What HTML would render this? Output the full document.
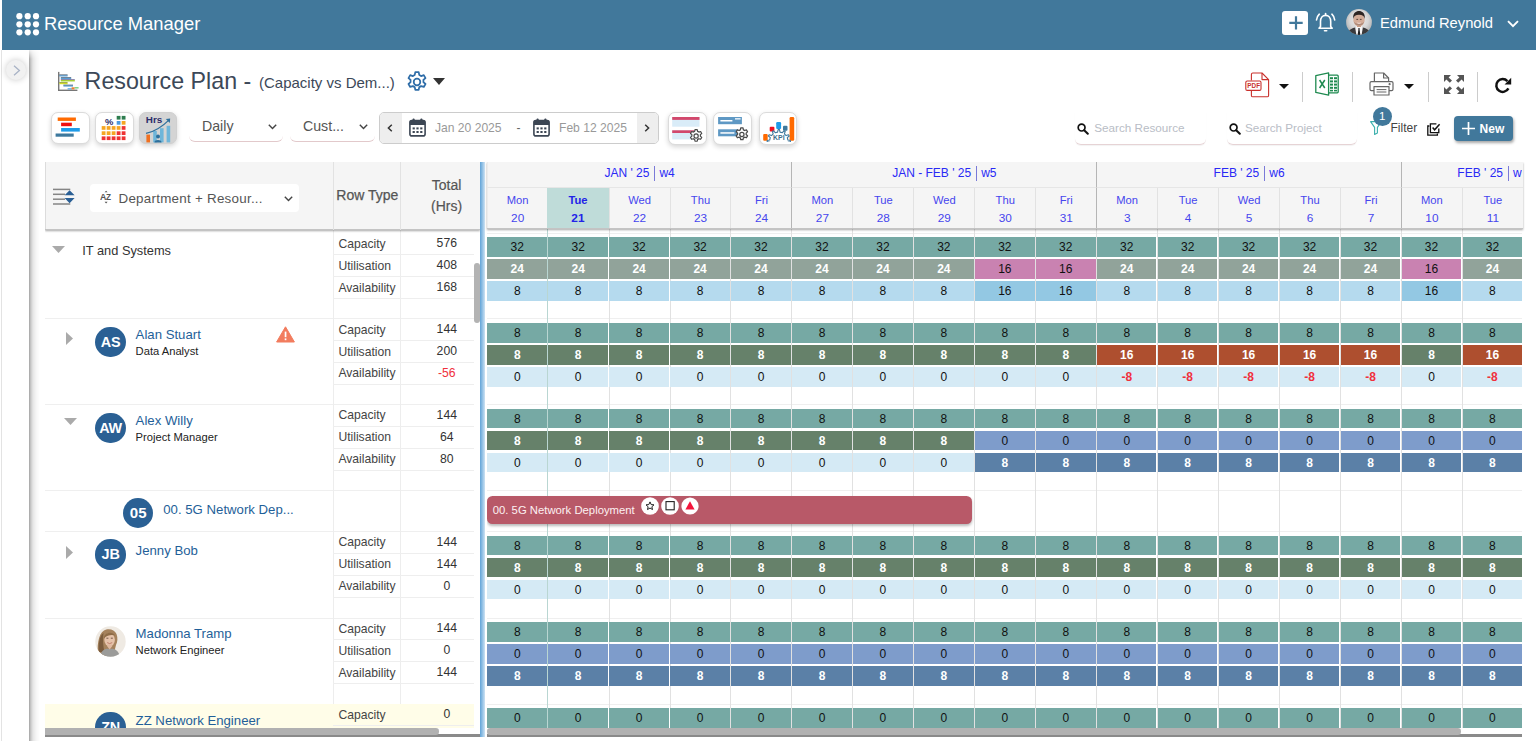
<!DOCTYPE html>
<html lang="en"><head><meta charset="utf-8"><title>Resource Manager - Resource Plan</title>
<style>
*{box-sizing:border-box;margin:0;padding:0}
html,body{width:1536px;height:741px;overflow:hidden;background:#fff}
body{position:relative;font-family:"Liberation Sans",sans-serif;color:#333;font-size:12px}
svg{display:block}
.abs,#hdr *,#main>*{position:absolute}
#hdr{position:absolute;left:2.4px;top:0;width:1533.6px;height:49.5px;background:#41789b;color:#fff}
#hdr .dots{left:13.2px;top:13px}
#hdr .app{left:41.6px;top:13px;font-size:18.4px;line-height:21px;white-space:nowrap}
#hdr .plus{left:1279.7px;top:10.9px;width:26px;height:23.7px;background:#fff;border-radius:3px}
#hdr .bell{left:1312.6px;top:11.8px}
#hdr .uav{left:1343.4px;top:9.4px}
#hdr .uname{left:1377.5px;top:15.2px;font-size:14.75px;line-height:17px;white-space:nowrap}
#hdr .uchev{left:1504.7px;top:20px}
#edge{position:absolute;left:1.4px;top:49.5px;width:1px;height:692px;background:#e3e3e3}
#side{position:absolute;left:2.4px;top:49.5px;width:26.8px;height:692px;background:#fff}
#side .tog{position:absolute;left:3.7px;top:10.3px;width:20.2px;height:20.2px;border-radius:50%;background:#f1f1f1;box-shadow:0 0 6px rgba(0,0,0,.22)}
#side .tog svg{position:absolute;left:7.2px;top:5px}
#shadow{position:absolute;left:29.2px;top:50px;width:12px;height:691px;background:linear-gradient(to right,rgba(0,0,0,.36),rgba(0,0,0,.2) 2px,rgba(0,0,0,.1) 4px,rgba(0,0,0,.04) 7px,rgba(0,0,0,0) 11px);-webkit-mask-image:linear-gradient(to bottom,rgba(0,0,0,.2),#000 9px);mask-image:linear-gradient(to bottom,rgba(0,0,0,.2),#000 9px)}
#main{position:absolute;left:0;top:0;width:1536px;height:741px}
.ttl{left:84.6px;top:67.9px;font-size:23.25px;line-height:27px;color:#3c4858;white-space:nowrap}
.sub{left:259px;top:74.2px;font-size:15px;line-height:18px;color:#3c4858;white-space:nowrap}
.ibtn{width:38.5px;height:32.6px;top:111.5px;border:1px solid #dbdbdb;border-radius:7px;background:#fff;box-shadow:0 2px 5px rgba(0,0,0,.17)}
.ibtn svg{position:absolute}
.ibtn.on{background:#d4d4d4;border-color:#d0d0d0}
.sel{top:112px;height:29.5px;border-bottom:1px solid #e2c9cb;border-radius:0 0 6px 6px;font-size:14.2px;line-height:17px;color:#555}
.sel span{position:absolute;left:12.6px;top:6.4px;white-space:nowrap}
.sel svg{position:absolute;top:11.6px}
.drange{left:379px;top:111.5px;width:280px;height:32.2px;border:1px solid #ccc;border-radius:5px;background:#fff;overflow:hidden}
.drange>*{position:absolute}
.drange .nb{top:0;width:22px;height:30px;background:#eee}
.drange .dt{top:8.3px;font-size:12.1px;line-height:14px;color:#999;white-space:nowrap}
.srch{top:112px;height:33.4px;border-bottom:1px solid #e6d3d5;border-radius:0 0 6px 6px;box-shadow:0 1px 1px rgba(0,0,0,.05)}
.srch span{position:absolute;top:8.6px;font-size:11.7px;line-height:14px;color:#b9bdc6;white-space:nowrap}
.srch svg{position:absolute;left:2.3px;top:10.6px}
.vsep{width:1px;top:72px;height:30px;background:#ccc}
.badge{left:1372.9px;top:107.1px;width:18.8px;height:18.8px;border-radius:50%;background:#41789b;color:#fff;font-size:11.5px;line-height:18.8px;text-align:center}
.filt{left:1390.5px;top:120.6px;font-size:12px;line-height:14px;color:#444}
.newb{left:1454px;top:115.6px;width:59.4px;height:25.3px;border-radius:4px;background:#41789b;box-shadow:1px 2px 3px rgba(0,0,0,.35);color:#fff;font-weight:700;font-size:12px;line-height:14px}
.newb span{position:absolute;left:25.6px;top:6px}
.newb svg{position:absolute;left:7.8px;top:6.2px}
/* grid */
#grid{position:absolute;left:44.6px;top:161.5px;width:1482px;height:575.5px;overflow:hidden;background:#fff}
#grid div,#grid svg,#grid span,#grid b{position:absolute}
.lhead{left:0;top:0;width:435.2px;height:68.6px;background:#f5f5f5;border-bottom:1px solid #c4c4c4;box-shadow:inset 1px 0 0 #dcdcdc,0 1px 2px rgba(0,0,0,.35);z-index:5}
.sorticon{left:8.5px;top:26.1px}
.grpsel{left:45.4px;top:22.5px;width:209px;height:28px;background:#fff;border-radius:4px}
.grpsel .az{left:9.6px;top:6.4px}
.grpsel .gtxt{left:28.5px;top:6.5px;font-size:13.4px;line-height:16px;color:#555;letter-spacing:.25px;white-space:nowrap}
.grpsel .chev{left:194.5px;top:11.6px}
.hdiv{top:0;width:1px;height:68px;background:#e2e2e2}
.hrow{left:291.7px;top:25.3px;font-size:14px;line-height:16px;color:#555;white-space:nowrap;font-weight:400;-webkit-text-stroke:.25px #555}
.htot{left:356px;width:92px;top:13.2px;text-align:center;font-size:14px;line-height:21.2px;color:#555;-webkit-text-stroke:.2px #555}
.ghead{left:442.1px;top:0;width:1036.5px;height:67.4px;background:#f5f5f5;border-bottom:1px solid #c4c4c4;box-shadow:0 1px 2px rgba(0,0,0,.35);z-index:5;overflow:hidden}
.wk{top:0;height:26px;border-left:1px solid #b5b5b5;border-bottom:1px solid #e6e6e6;text-align:center;white-space:nowrap;font-size:12px;line-height:24px;padding-bottom:2px;color:#2929f5;display:flex;justify-content:center;align-items:center}
#grid .wk span{position:static}
#grid .wk i{position:static;display:inline-block;width:1px;height:15px;background:#7a7ad8;margin:0 4px 0 5px}
.dy{top:26px;width:60.95px;height:40.7px;border-left:1px solid #e2e2e2;text-align:center;color:#4646ee;font-size:11.2px}
.dy.wkb{border-left-color:#b5b5b5}
#grid .dy b{font-weight:400;left:0;width:100%;line-height:13px}
#grid .dy b:first-child{top:6.8px}
#grid .dy b:last-child{top:24.2px;font-size:11.8px}
.dy.today{background:#bfdcd9;color:#2222e8;border-left:0;left:60.6px !important;width:61.3px}
.dy.first,.wk.first{border-left-color:#ececec}
#grid .dy.today b{font-weight:700}
.split{left:435.4px;top:0;width:4.6px;height:575.4px;background:linear-gradient(to right,#62a4d8,#8fbfe4 45%,#cde2f3);z-index:6}
.lbody{left:0;top:0;width:435.2px;height:575.5px;overflow:hidden}
.rbody{left:442.1px;top:0;width:1035.8px;height:575.5px;overflow:hidden}
.rt{left:293.8px;font-size:12.15px;line-height:14px;color:#444;white-space:nowrap}
.tv{left:372.2px;width:60px;text-align:center;font-size:12.2px;line-height:14px;color:#333;margin-top:-.6px}
.tv.neg{color:#f0303c}
.rl{left:288.9px;width:140.5px;height:1px;background:#eeeeee}
.gl{left:0;width:100%;height:1px;background:#efefef}
.lbody .gl{width:429.4px}
.vd{top:68px;width:1px;height:510px;background:#ededed}
.zz{left:0;width:429.4px;height:40px;background:#fffde8}
.av{left:50.9px;width:30.2px;height:30.2px;border-radius:50%;background:#2a6094;color:#fff;font-weight:700;font-size:14.4px;line-height:30.6px;text-align:center;letter-spacing:-.2px}
.av.pj{left:78.7px;font-size:15px;letter-spacing:.3px}
.nm{left:91px;font-size:13.2px;line-height:15px;color:#1f5f99;white-space:nowrap}
.nm.pjn{left:118.7px;margin-top:-1.2px}
.ro{left:91px;font-size:11.2px;line-height:13px;color:#222;white-space:nowrap}
.dept{left:37.7px;font-size:12.8px;line-height:15px;color:#333;white-space:nowrap}
.warn{left:231.6px}
.ph{left:50.6px}
.vthumb{left:429.4px;top:101.3px;width:5.6px;height:60.7px;border-radius:3px;background:#b3b3b3}
.crow{left:0;width:1040px}
.c{top:0;height:100%;width:59.5px;text-align:center;font-size:12px;color:#111}
.c.w{color:#fff;font-weight:700}
.c.neg{color:#f0303c;font-weight:700}
.vl{top:66px;width:1px;height:510px;background:#e1e1e1}
.vl.tl{background:#b9d6d2}
.pbar{left:.3px;width:485.4px;height:27.7px;border-radius:5.5px;background:#b85968;box-shadow:0 2px 3px rgba(0,0,0,.28)}
.pbar span{left:5.8px;top:0;font-size:11.3px;line-height:28.4px;color:#fdf1f2;white-space:nowrap}
.pi{top:.7px}
.bcov{left:0;top:566.5px;width:1477.9px;height:9px;background:#fff;z-index:4}
.bbar{left:0;top:572.8px;width:435.4px;height:2.6px;background:#8a8a8a;z-index:5}
.bbar2{left:442.4px;top:572.8px;width:1035.5px;height:2.6px;background:#8a8a8a;z-index:5}
.hth1{left:0;top:566.7px;width:394.2px;height:6.4px;background:#b1b1b1;border-radius:0 3.2px 3.2px 0;z-index:7}
.hth2{left:442.6px;top:566.7px;width:974.2px;height:6.4px;background:#b1b1b1;border-radius:3.2px;z-index:7}

.gcov{left:1035.6px;top:0;width:2px;height:25px;background:#f5f5f5;z-index:3}

</style></head>
<body>
<div id="hdr">
<svg class="dots" width="24" height="24" viewBox="0 0 24 24" fill="#fff"><circle cx="3.4" cy="3.2" r="3.1"/><circle cx="11.7" cy="3.2" r="3.1"/><circle cx="20" cy="3.2" r="3.1"/><circle cx="3.4" cy="11.3" r="3.1"/><circle cx="11.7" cy="11.3" r="3.1"/><circle cx="20" cy="11.3" r="3.1"/><circle cx="3.4" cy="19.3" r="3.1"/><circle cx="11.7" cy="19.3" r="3.1"/><circle cx="20" cy="19.3" r="3.1"/></svg>
<div class="app">Resource Manager</div>
<div class="plus"><svg width="26" height="24" viewBox="0 0 26 24"><path d="M14 5.2 V18.6 M7.3 11.9 H20.7" stroke="#41789b" stroke-width="2.2" fill="none"/></svg></div>
<svg class="bell" width="22" height="21" viewBox="0 0 22 21" fill="none" stroke="#fff" stroke-width="1.6" stroke-linecap="round"><path d="M5.5 14.4 V9.4 C5.5 5.8 7.6 3.4 10.6 3.4 C13.6 3.4 15.7 5.8 15.7 9.4 V14.4 L17.2 16.2 H4 Z" stroke-linejoin="round"/><path d="M9.5 18.7 H11.7"/><path d="M10.6 3.2 V1.6"/><path d="M4.3 2.2 C2.6 3.8 1.7 5.8 1.5 8"/><path d="M16.9 2.2 C18.6 3.8 19.5 5.8 19.7 8"/></svg>
<svg class="uav" width="26" height="26" viewBox="0 0 26 26"><defs><clipPath id="uc"><circle cx="13" cy="13" r="12.9"/></clipPath><radialGradient id="ug" cx="50%" cy="42%" r="60%"><stop offset="0" stop-color="#efefef"/><stop offset=".6" stop-color="#d6d6d6"/><stop offset="1" stop-color="#a9a9a9"/></radialGradient></defs><g clip-path="url(#uc)"><rect width="26" height="26" fill="url(#ug)"/><path d="M1 26 C2 21 5.5 19.4 9.4 18.6 L13 22 L16.6 18.6 C20.5 19.4 24 21 25 26 Z" fill="#3a3a3c"/><path d="M9.2 18.7 L10.8 17 L15.2 17 L16.8 18.7 L15.6 26 L10.4 26 Z" fill="#f5f5f5"/><path d="M12.1 19.3 L13.9 19.3 L13.6 20.6 L14.4 26 L11.6 26 L12.4 20.6 Z" fill="#1f1f22"/><rect x="11" y="14.6" width="4" height="3.4" fill="#c99b82"/><ellipse cx="13" cy="10.9" rx="5.7" ry="6.4" fill="#d3ac98"/><path d="M7.2 10 C6.6 4 10 2 13 2 C16 2 19.4 4 18.8 10 C18.2 7 16.4 5.8 13 5.8 C9.6 5.8 7.8 7 7.2 10 Z" fill="#2d2523"/><path d="M7.8 12.6 C8.4 18 17.6 18 18.2 12.6 C17 15.8 9 15.8 7.8 12.6 Z" fill="#8b6a5b" opacity=".55"/><path d="M10.4 10.4 h1.7 M13.9 10.4 h1.7" stroke="#3b2a25" stroke-width=".8"/><path d="M11.4 13.9 Q13 15 14.6 13.9" stroke="#f3e6e0" stroke-width=".8" fill="none"/></g></svg>
<div class="uname">Edmund Reynold</div>
<svg class="uchev" width="12" height="8" viewBox="0 0 12 8"><path d="M1 1.2 L6 6.2 L11 1.2" stroke="#fff" stroke-width="1.9" fill="none"/></svg>
</div>
<div id="edge"></div>
<div id="side"><div class="tog"><svg width="8" height="11" viewBox="0 0 8 11"><path d="M1 0.8 L6.4 5.5 L1 10.2" stroke="#a9b3c6" stroke-width="1.3" fill="none"/></svg></div></div>
<div id="shadow"></div>
<div id="main">
<svg style="left:57.1px;top:71.2px" width="22" height="21" viewBox="0 0 22 21"><rect x="1.0" y="0.9" width="1.4" height="19.1" fill="#777"/><rect x="1.0" y="18.6" width="19.4" height="1.4" fill="#777"/><rect x="2.3" y="3.5" width="8.3" height="0.9" fill="#3a4a5a"/><rect x="2.3" y="4.4" width="8.3" height="1.0" fill="#3a8fd0"/><rect x="3.8" y="6.3" width="10.4" height="0.9" fill="#34506e"/><rect x="3.8" y="7.2" width="10.4" height="0.9" fill="#3a8fd0"/><rect x="3.8" y="8.4" width="14.0" height="0.8" fill="#4a3f7a"/><rect x="3.8" y="9.2" width="14.0" height="1.2" fill="#9acb10"/><rect x="2.3" y="11.2" width="8.3" height="0.8" fill="#8f9a20"/><rect x="2.3" y="12.0" width="8.3" height="1.2" fill="#cfdc28"/><rect x="6.4" y="13.7" width="9.6" height="0.9" fill="#34506e"/><rect x="6.4" y="14.6" width="9.6" height="0.9" fill="#3a8fd0"/><rect x="10.6" y="17.3" width="4.3" height="1.1" fill="#3f9fe0"/><rect x="17.4" y="16.3" width="4.2" height="1.1" fill="#4fc060"/><rect x="14.6" y="16.3" width="2.9" height="2.1" fill="#f08030"/></svg>
<div class="ttl">Resource Plan -</div>
<div class="sub">(Capacity vs Dem...)</div>
<svg style="left:404.5px;top:70.2px" width="24" height="24" viewBox="0 0 24 24" fill="none" stroke="#2f6da8" stroke-width="1.75" stroke-linejoin="round"><path d="M10.3 2.2 h3.4 l.55 2.75 a7.4 7.4 0 0 1 1.9 1.1 l2.65-.9 1.7 2.95 -2.1 1.85 a7.4 7.4 0 0 1 0 2.2 l2.1 1.85 -1.7 2.95 -2.65-.9 a7.4 7.4 0 0 1 -1.9 1.1 l-.55 2.75 h-3.4 l-.55-2.75 a7.4 7.4 0 0 1 -1.9-1.1 l-2.65.9 -1.7-2.95 2.1-1.85 a7.4 7.4 0 0 1 0-2.2 l-2.1-1.85 1.7-2.95 2.65.9 a7.4 7.4 0 0 1 1.9-1.1 z"/><circle cx="12" cy="12" r="3.3"/></svg>
<svg style="left:432.8px;top:78px" width="12" height="7" viewBox="0 0 12 7"><path d="M0 0 H12 L6 7 Z" fill="#333"/></svg>

<div class="ibtn" style="left:51.3px"><svg style="left:0;top:-.6px" width="36" height="30" viewBox="0 0 36 30"><rect x="5.7" y="5.5" width="18.2" height="3.4" fill="#ff6a00"/><rect x="9.1" y="10.7" width="10.7" height="3.5" fill="#f01010"/><rect x="9.1" y="16" width="18.7" height="3.6" fill="#1e9be8"/><rect x="3.6" y="21.5" width="18.1" height="3.2" fill="#3d789d"/></svg></div>
<div class="ibtn" style="left:95.3px"><svg style="left:0;top:-.7px" width="36" height="30" viewBox="0 0 36 30"><rect x="20.7" y="3.9" width="3.8" height="3.7" fill="#2e7d4f"/><rect x="25.7" y="3.9" width="3.8" height="3.7" fill="#2e7d4f"/><rect x="20.7" y="9.0" width="3.8" height="3.7" fill="#4a9be0"/><rect x="25.7" y="9.0" width="3.8" height="3.7" fill="#f5a623"/><rect x="5.7" y="14.1" width="3.8" height="3.7" fill="#f5a623"/><rect x="10.7" y="14.1" width="3.8" height="3.7" fill="#f5a623"/><rect x="15.7" y="14.1" width="3.8" height="3.7" fill="#f5a623"/><rect x="20.7" y="14.1" width="3.8" height="3.7" fill="#f5a623"/><rect x="25.7" y="14.1" width="3.8" height="3.7" fill="#ee3333"/><rect x="5.7" y="19.3" width="3.8" height="3.7" fill="#f5a623"/><rect x="10.7" y="19.3" width="3.8" height="3.7" fill="#f5a623"/><rect x="15.7" y="19.3" width="3.8" height="3.7" fill="#f5a623"/><rect x="20.7" y="19.3" width="3.8" height="3.7" fill="#ee3333"/><rect x="25.7" y="19.3" width="3.8" height="3.7" fill="#ee3333"/><rect x="5.7" y="24.4" width="3.8" height="3.7" fill="#ee3333"/><rect x="10.7" y="24.4" width="3.8" height="3.7" fill="#ee3333"/><rect x="15.7" y="24.4" width="3.8" height="3.7" fill="#ee3333"/><rect x="20.7" y="24.4" width="3.8" height="3.7" fill="#ee3333"/><rect x="25.7" y="24.4" width="3.8" height="3.7" fill="#ee3333"/><text x="9" y="12.6" font-size="9.4" font-weight="700" fill="#2c2c6a" font-family="Liberation Sans, sans-serif">%</text></svg></div>
<div class="ibtn on" style="left:138.8px"><svg style="left:5px;top:2.4px" width="28" height="28" viewBox="0 0 28 28"><text x="0.8" y="8" font-size="9.9" font-weight="700" fill="#2c2c6a" font-family="Liberation Sans, sans-serif">Hrs</text><rect x="1.4" y="19.6" width="3.6" height="7.8" fill="#f07020"/><rect x="8.2" y="16" width="3.6" height="11.4" fill="#6fb6da"/><rect x="15" y="13.2" width="3.6" height="14.2" fill="#6fb6da"/><rect x="21.6" y="10.8" width="3.6" height="16.6" fill="#6fb6da"/><path d="M1 18.4 C9 16.8 17 12 24.4 4.6" stroke="#2d6f9c" stroke-width="1.2" fill="none"/><path d="M20.8 4 L25.2 3.6 L24.8 8 Z" fill="#2d6f9c"/><circle cx="13" cy="21.6" r="2" fill="#2d6f9c"/><path d="M9.4 27.4 C9.6 24.2 16.4 24.2 16.6 27.4 Z" fill="#2d6f9c"/></svg></div>

<div class="sel" style="left:189.4px;width:93.6px"><span>Daily</span><svg style="left:78.4px" width="9" height="6" viewBox="0 0 9 6"><path d="M0.8 0.8 L4.5 4.6 L8.2 0.8" stroke="#444" stroke-width="1.4" fill="none"/></svg></div>
<div class="sel" style="left:290.4px;width:84.3px"><span>Cust...</span><svg style="left:68.4px" width="9" height="6" viewBox="0 0 9 6"><path d="M0.8 0.8 L4.5 4.6 L8.2 0.8" stroke="#444" stroke-width="1.4" fill="none"/></svg></div>

<div class="drange">
<div class="nb" style="left:0"></div><div class="nb" style="left:256.5px"></div>
<svg style="left:7.4px;top:11px" width="6" height="8" viewBox="0 0 6 8"><path d="M4.8 0.8 L1.4 4 L4.8 7.2" stroke="#333" stroke-width="1.5" fill="none"/></svg>
<svg style="left:263.8px;top:11px" width="6" height="8" viewBox="0 0 6 8"><path d="M1.2 0.8 L4.6 4 L1.2 7.2" stroke="#333" stroke-width="1.5" fill="none"/></svg>
<svg style="left:29px;top:5px" width="17" height="19" viewBox="0 0 17 19"><rect x="0.9" y="2.6" width="15.2" height="15.3" rx="2" fill="none" stroke="#3c4654" stroke-width="1.6"/><rect x="0.9" y="2.6" width="15.2" height="4.4" fill="#3c4654"/><rect x="3.6" y="0.4" width="2" height="4" rx=".8" fill="#3c4654"/><rect x="11.4" y="0.4" width="2" height="4" rx=".8" fill="#3c4654"/><g fill="#3c4654"><rect x="3.6" y="9.4" width="2.2" height="2"/><rect x="7.4" y="9.4" width="2.2" height="2"/><rect x="11.2" y="9.4" width="2.2" height="2"/><rect x="3.6" y="13" width="2.2" height="2"/><rect x="7.4" y="13" width="2.2" height="2"/><rect x="11.2" y="13" width="2.2" height="2"/></g></svg>
<div class="dt" style="left:55px">Jan 20 2025</div>
<div class="dt" style="left:136.6px;color:#666">-</div>
<svg style="left:153px;top:5px" width="17" height="19" viewBox="0 0 17 19"><rect x="0.9" y="2.6" width="15.2" height="15.3" rx="2" fill="none" stroke="#3c4654" stroke-width="1.6"/><rect x="0.9" y="2.6" width="15.2" height="4.4" fill="#3c4654"/><rect x="3.6" y="0.4" width="2" height="4" rx=".8" fill="#3c4654"/><rect x="11.4" y="0.4" width="2" height="4" rx=".8" fill="#3c4654"/><g fill="#3c4654"><rect x="3.6" y="9.4" width="2.2" height="2"/><rect x="7.4" y="9.4" width="2.2" height="2"/><rect x="11.2" y="9.4" width="2.2" height="2"/><rect x="3.6" y="13" width="2.2" height="2"/><rect x="7.4" y="13" width="2.2" height="2"/><rect x="11.2" y="13" width="2.2" height="2"/></g></svg>
<div class="dt" style="left:179px">Feb 12 2025</div>
</div>

<div class="ibtn" style="left:668.2px;top:112px"><svg style="left:0;top:0" width="37" height="31" viewBox="0 0 37 31"><rect x="3.2" y="4" width="27.3" height="9.7" fill="#d9ecf8"/><rect x="3.2" y="4" width="27.3" height="2.9" fill="#d2486c"/><rect x="3.2" y="17.3" width="22" height="9.1" fill="#d9ecf8"/><rect x="3.2" y="17.3" width="22" height="2.7" fill="#d2486c"/><g transform="translate(19.2,15.1) scale(.66)" fill="#fff" stroke="#4a4a4a" stroke-width="1.8" stroke-linejoin="round"><path d="M10.3 2.2 h3.4 l.55 2.75 a7.4 7.4 0 0 1 1.9 1.1 l2.65-.9 1.7 2.95 -2.1 1.85 a7.4 7.4 0 0 1 0 2.2 l2.1 1.85 -1.7 2.95 -2.65-.9 a7.4 7.4 0 0 1 -1.9 1.1 l-.55 2.75 h-3.4 l-.55-2.75 a7.4 7.4 0 0 1 -1.9-1.1 l-2.65.9 -1.7-2.95 2.1-1.85 a7.4 7.4 0 0 1 0-2.2 l-2.1-1.85 1.7-2.95 2.65.9 a7.4 7.4 0 0 1 1.9-1.1 z"/><circle cx="12" cy="12" r="3.2"/></g></svg></div>
<div class="ibtn" style="left:713.4px;top:112px"><svg style="left:0;top:0" width="37" height="31" viewBox="0 0 37 31"><rect x="4.1" y="4" width="23.8" height="7.2" fill="#5e98c4"/><rect x="6.4" y="7" width="12" height="1.5" fill="#fff"/><rect x="21" y="5" width="5.6" height="1.6" fill="#dbe9f4"/><rect x="4.1" y="16.3" width="20" height="7" fill="#5e98c4"/><rect x="6.4" y="19.2" width="14" height="1.5" fill="#fff"/><g transform="translate(19.9,13.5) scale(.665)" fill="#fff" stroke="#4a4a4a" stroke-width="1.9" stroke-linejoin="round"><path d="M10.3 2.2 h3.4 l.55 2.75 a7.4 7.4 0 0 1 1.9 1.1 l2.65-.9 1.7 2.95 -2.1 1.85 a7.4 7.4 0 0 1 0 2.2 l2.1 1.85 -1.7 2.95 -2.65-.9 a7.4 7.4 0 0 1 -1.9 1.1 l-.55 2.75 h-3.4 l-.55-2.75 a7.4 7.4 0 0 1 -1.9-1.1 l-2.65.9 -1.7-2.95 2.1-1.85 a7.4 7.4 0 0 1 0-2.2 l-2.1-1.85 1.7-2.95 2.65.9 a7.4 7.4 0 0 1 1.9-1.1 z"/><circle cx="12" cy="12" r="3.2"/></g></svg></div>
<div class="ibtn" style="left:758.5px;top:112px"><svg style="left:3.3px;top:4px" width="32" height="25" viewBox="0 0 32 25"><rect x="0.2" y="17" width="4.5" height="6.8" rx="1" fill="#ff6a00"/><rect x="6.7" y="9.8" width="4.7" height="4.6" rx="1" fill="#f01020"/><rect x="13.2" y="5.1" width="4.9" height="6.9" rx="1.1" fill="#1e9be8"/><rect x="20" y="8.8" width="4.5" height="5" rx="1" fill="#3d789d"/><rect x="26.6" y="0" width="4.6" height="23.8" rx="1.3" fill="#ff6a00"/><path d="M6.7 25.4 L4.2 24.9 L4.2 23.5 L6.7 23.0 L7.3 20.7 L5.4 19.0 L6.1 17.8 L8.5 18.6 L10.2 16.9 L9.4 14.5 L10.6 13.8 L12.3 15.7 L14.6 15.1 L15.1 12.6 L16.5 12.6 L17.0 15.1 L19.3 15.7 L21.0 13.8 L22.2 14.5 L21.4 16.9 L23.1 18.6 L25.5 17.8 L26.2 19.0 L24.3 20.7 L24.9 23.0 L27.4 23.5 L27.4 24.9 L24.9 25.4" fill="#fff" stroke="#41789b" stroke-width="1.1" stroke-linejoin="round"/><text x="10.1" y="22.9" font-size="6.9" font-weight="700" fill="#3d6d8d" font-family="Liberation Sans, sans-serif">KPI</text></svg></div>

<div class="srch" style="left:1075.2px;width:130.7px"><svg width="12" height="12" viewBox="0 0 12 12"><circle cx="4.6" cy="4.6" r="3.4" fill="none" stroke="#111" stroke-width="1.7"/><path d="M7.2 7.2 L10.8 10.8" stroke="#111" stroke-width="2" stroke-linecap="round"/></svg><span style="left:19px">Search Resource</span></div>
<div class="srch" style="left:1227px;width:130px"><svg width="12" height="12" viewBox="0 0 12 12"><circle cx="4.6" cy="4.6" r="3.4" fill="none" stroke="#111" stroke-width="1.7"/><path d="M7.2 7.2 L10.8 10.8" stroke="#111" stroke-width="2" stroke-linecap="round"/></svg><span style="left:18px">Search Project</span></div>

<svg style="left:1244.6px;top:71.6px" width="25" height="26" viewBox="0 0 25 26" fill="none" stroke="#c9302c" stroke-width="1.1" stroke-linejoin="round"><path d="M6.4 8.6 V2.4 Q6.4 1 7.8 1 H17 L23.6 7.6 V23.4 Q23.6 24.8 22.2 24.8 H7.8 Q6.4 24.8 6.4 23.4 V18.6"/><path d="M17 1 V7.6 H23.6"/><rect x="0.8" y="9" width="15.2" height="9.4" rx="1.4" fill="#fff"/><text x="2.3" y="16.2" font-size="6.4" font-weight="700" fill="#c9302c" stroke="none" font-family="Liberation Sans, sans-serif">PDF</text></svg>
<svg style="left:1279.2px;top:84px" width="10" height="5" viewBox="0 0 10 5"><path d="M0 0 H10 L5 5 Z" fill="#111"/></svg>
<div class="vsep" style="left:1302.2px"></div>
<svg style="left:1314.8px;top:71.8px" width="24" height="24" viewBox="0 0 24 24" fill="none" stroke="#1f8a50" stroke-width="1.3" stroke-linejoin="round"><path d="M0.8 3.6 L13.6 0.8 V23.2 L0.8 20.4 Z" fill="#fff"/><path d="M13.6 3.2 H22.2 Q23.2 3.2 23.2 4.2 V19.8 Q23.2 20.8 22.2 20.8 H13.6"/><path d="M4.6 8 L9.8 16 M9.8 8 L4.6 16" stroke-width="1.5"/><g stroke="none" fill="#1f8a50"><rect x="15" y="5.2" width="3" height="2"/><rect x="19" y="5.2" width="3" height="2"/><rect x="15" y="8.4" width="3" height="2"/><rect x="19" y="8.4" width="3" height="2"/><rect x="15" y="11.6" width="3" height="2"/><rect x="19" y="11.6" width="3" height="2"/><rect x="15" y="14.8" width="3" height="2"/><rect x="19" y="14.8" width="3" height="2"/><rect x="15" y="17.8" width="3" height="1.6"/><rect x="19" y="17.8" width="3" height="1.6"/></g></svg>
<div class="vsep" style="left:1352px"></div>
<svg style="left:1369.4px;top:72px" width="25" height="24" viewBox="0 0 25 24" fill="none" stroke="#666" stroke-width="1.2" stroke-linejoin="round"><path d="M5.4 9.6 V1 H14.6 L19.6 6 V9.6"/><path d="M14.6 1 V6 H19.6"/><path d="M5 18.6 H2.4 Q1 18.6 1 17.2 V11 Q1 9.6 2.4 9.6 H22.6 Q24 9.6 24 11 V17.2 Q24 18.6 22.6 18.6 H20"/><rect x="5" y="14.6" width="15" height="8.4" fill="#fff"/><path d="M7.6 17.6 H17.4 M7.6 20 H17.4" stroke-width="1"/><circle cx="20.6" cy="12.2" r=".5"/></svg>
<svg style="left:1403.8px;top:84.2px" width="10" height="5" viewBox="0 0 10 5"><path d="M0 0 H10 L5 5 Z" fill="#111"/></svg>
<div class="vsep" style="left:1427.6px"></div>
<svg style="left:1444.2px;top:75.4px" width="20" height="19" viewBox="0 0 20 19" fill="#555"><path d="M0 0 H7 L4.6 2.4 L8 5.6 L5.8 7.8 L2.4 4.6 L0 7 Z"/><path d="M20 0 V7 L17.6 4.6 L14.2 7.8 L12 5.6 L15.4 2.4 L13 0 Z"/><path d="M0 19 V12 L2.4 14.4 L5.8 11.2 L8 13.4 L4.6 16.6 L7 19 Z"/><path d="M20 19 H13 L15.4 16.6 L12 13.4 L14.2 11.2 L17.6 14.4 L20 12 Z"/></svg>
<div class="vsep" style="left:1476.9px"></div>
<svg style="left:1494px;top:76.6px" width="18" height="17" viewBox="0 0 18 17"><path d="M14.4 11.4 A6.4 6.4 0 1 1 13.4 4.1" fill="none" stroke="#111" stroke-width="2.5"/><path d="M17.2 0.8 V7.4 H10.6 Z" fill="#111"/></svg>

<svg style="left:1370.2px;top:120.8px" width="12" height="14" viewBox="0 0 12 14" fill="none" stroke="#3bb0ad" stroke-width="1.1" stroke-linejoin="round"><path d="M0.6 0.6 H11.4 L7.4 6.4 V12 L4.6 13.4 V6.4 Z"/></svg>
<div class="badge">1</div>
<div class="filt">Filter</div>
<svg style="left:1426.6px;top:122.6px" width="14" height="13" viewBox="0 0 14 13" fill="none" stroke="#111" stroke-width="1.3"><path d="M2.4 3 H0.8 V12.2 H10.4 V10.6"/><path d="M11.8 5.4 V9.6 H3.4 V0.8 H9.4"/><path d="M5.6 4.6 L7.6 6.8 L12.6 1.2" stroke-width="1.5"/></svg>
<div class="newb"><svg width="13" height="13" viewBox="0 0 13 13"><path d="M6.5 0 V13 M0 6.5 H13" stroke="#fff" stroke-width="1.7"/></svg><span>New</span></div>
</div>
<div id="grid">
<div class="lhead">
<svg class="sorticon" width="23" height="18" viewBox="0 0 23 18"><g stroke="#858585" stroke-width="1.5"><line x1="0" y1="1.4" x2="17.3" y2="1.4"/><line x1="0" y1="6.3" x2="12" y2="6.3"/><line x1="0" y1="11.2" x2="12" y2="11.2"/><line x1="0" y1="16" x2="17.3" y2="16"/></g><path d="M11.6 7.3 L16.6 2.2 L21.6 7.3 Z M11.6 9.9 L21.6 9.9 L16.6 15.3 Z" fill="#2a5f95"/></svg>
<div class="grpsel"><svg class="az" width="13" height="15" viewBox="0 0 13 15"><text x="0" y="10.2" font-size="8.8" font-weight="700" fill="#555" font-family="Liberation Sans, sans-serif">A</text><text x="6" y="10.2" font-size="8.2" font-weight="700" fill="#555" font-family="Liberation Sans, sans-serif">Z</text><path d="M4.6 2.3 L6.1 0.8 L7.6 2.3 Z M4.6 11.8 L6.1 13.4 L7.6 11.8 Z" fill="#555"/></svg><span class="gtxt">Department + Resour...</span><svg class="chev" width="9" height="6" viewBox="0 0 9 6"><path d="M0.8 0.8 L4.5 4.6 L8.2 0.8" stroke="#444" stroke-width="1.4" fill="none"/></svg></div>
<div class="hdiv" style="left:288.4px"></div><div class="hdiv" style="left:355.3px"></div>
<div class="hrow">Row Type</div>
<div class="htot">Total<br>(Hrs)</div>
</div>
<div class="ghead">
<div class="wk first" style="left:0px;width:304.75px"><span>JAN ' 25</span><i></i><span>w4</span></div>
<div class="wk" style="left:304.75px;width:304.75px"><span>JAN - FEB ' 25</span><i></i><span>w5</span></div>
<div class="wk" style="left:609.5px;width:304.75px"><span>FEB ' 25</span><i></i><span>w6</span></div>
<div class="wk" style="left:914.25px;width:182.85px"><span>FEB ' 25</span><i></i><span>w7</span></div>
<div class="dy first" style="left:0px"><b>Mon</b><b>20</b></div>
<div class="dy today" style="left:60.95px"><b>Tue</b><b>21</b></div>
<div class="dy" style="left:121.9px"><b>Wed</b><b>22</b></div>
<div class="dy" style="left:182.85px"><b>Thu</b><b>23</b></div>
<div class="dy" style="left:243.8px"><b>Fri</b><b>24</b></div>
<div class="dy wkb" style="left:304.75px"><b>Mon</b><b>27</b></div>
<div class="dy" style="left:365.7px"><b>Tue</b><b>28</b></div>
<div class="dy" style="left:426.65px"><b>Wed</b><b>29</b></div>
<div class="dy" style="left:487.6px"><b>Thu</b><b>30</b></div>
<div class="dy" style="left:548.55px"><b>Fri</b><b>31</b></div>
<div class="dy wkb" style="left:609.5px"><b>Mon</b><b>3</b></div>
<div class="dy" style="left:670.45px"><b>Tue</b><b>4</b></div>
<div class="dy" style="left:731.4px"><b>Wed</b><b>5</b></div>
<div class="dy" style="left:792.35px"><b>Thu</b><b>6</b></div>
<div class="dy" style="left:853.3px"><b>Fri</b><b>7</b></div>
<div class="dy wkb" style="left:914.25px"><b>Mon</b><b>10</b></div>
<div class="dy" style="left:975.2px"><b>Tue</b><b>11</b></div>
<div class="gcov"></div></div>
<div class="split"></div>
<div class="lbody"><div class="gl" style="top:156.9px"></div><div class="gl" style="top:242.7px"></div><div class="gl" style="top:328.4px"></div><div class="gl" style="top:369.6px"></div><div class="gl" style="top:456.1px"></div><div class="gl" style="top:542.3px"></div><div class="vd" style="left:288.4px"></div><div class="vd" style="left:355.3px"></div><div class="zz" style="top:542.3px"></div><svg class="cd" style="left:7.9px;top:84.2px" width="13" height="7" viewBox="0 0 13 7"><path d="M0 0 L13 0 L6.5 7 Z" fill="#aaa"/></svg><div class="dept" style="top:81.5px">IT and Systems</div><div class="rt" style="top:75.4px">Capacity</div><div class="tv" style="top:75.4px">576</div><div class="rt" style="top:97.3px">Utilisation</div><div class="tv" style="top:97.3px">408</div><div class="rt" style="top:119.2px">Availability</div><div class="tv" style="top:119.2px">168</div><div class="rl" style="top:92.8px"></div><div class="rl" style="top:114.7px"></div><div class="rl" style="top:136.7px"></div><svg class="cd" style="left:21.7px;top:170.5px" width="7" height="13" viewBox="0 0 7 13"><path d="M0 0 L7 6.5 L0 13 Z" fill="#aaa"/></svg><div class="av" style="top:165.2px">AS</div><div class="nm" style="top:165.6px">Alan Stuart</div><div class="ro" style="top:183.4px">Data Analyst</div><svg class="warn" style="top:164.7px" width="19" height="17" viewBox="0 0 19 17"><path d="M9.5 0.8 L18.4 16 L0.6 16 Z" fill="#f27c5e" stroke="#f27c5e" stroke-width="1" stroke-linejoin="round"/><rect x="8.7" y="5.6" width="1.7" height="5.6" fill="#fff"/><rect x="8.7" y="12.4" width="1.7" height="1.8" fill="#fff"/></svg><div class="rt" style="top:161.1px">Capacity</div><div class="tv" style="top:161.1px">144</div><div class="rt" style="top:183px">Utilisation</div><div class="tv" style="top:183px">200</div><div class="rt" style="top:204.9px">Availability</div><div class="tv neg" style="top:204.9px">-56</div><div class="rl" style="top:178.5px"></div><div class="rl" style="top:200.4px"></div><div class="rl" style="top:222.4px"></div><svg class="cd" style="left:19.8px;top:256.3px" width="13" height="7" viewBox="0 0 13 7"><path d="M0 0 L13 0 L6.5 7 Z" fill="#aaa"/></svg><div class="av" style="top:251px">AW</div><div class="nm" style="top:251.4px">Alex Willy</div><div class="ro" style="top:269.2px">Project Manager</div><div class="rt" style="top:246.9px">Capacity</div><div class="tv" style="top:246.9px">144</div><div class="rt" style="top:268.8px">Utilisation</div><div class="tv" style="top:268.8px">64</div><div class="rt" style="top:290.7px">Availability</div><div class="tv" style="top:290.7px">80</div><div class="rl" style="top:264.3px"></div><div class="rl" style="top:286.2px"></div><div class="rl" style="top:308.2px"></div><div class="av pj" style="top:336.6px">05</div><div class="nm pjn" style="top:342px">00. 5G Network Dep...</div><svg class="cd" style="left:21.7px;top:384.9px" width="7" height="13" viewBox="0 0 7 13"><path d="M0 0 L7 6.5 L0 13 Z" fill="#aaa"/></svg><div class="av" style="top:377.9px">JB</div><div class="nm" style="top:381.6px">Jenny Bob</div><div class="rt" style="top:373.8px">Capacity</div><div class="tv" style="top:373.8px">144</div><div class="rt" style="top:395.7px">Utilisation</div><div class="tv" style="top:395.7px">144</div><div class="rt" style="top:417.6px">Availability</div><div class="tv" style="top:417.6px">0</div><div class="rl" style="top:391.2px"></div><div class="rl" style="top:413.1px"></div><div class="rl" style="top:435.1px"></div><div class="nm" style="top:464.8px">Madonna Tramp</div><div class="ro" style="top:482.6px">Network Engineer</div><svg class="ph" style="top:464.4px" width="31" height="31" viewBox="0 0 31 31"><defs><clipPath id="mc"><circle cx="15.5" cy="15.5" r="15.2"/></clipPath></defs><g clip-path="url(#mc)"><rect width="31" height="31" fill="#efeae3"/><path d="M3.5 31 C1.5 22 3 8 9 4.5 C13 2 19.5 3 21.5 8 C23 12 22.5 16 21 19 L19 27 L8 31 Z" fill="#a5825c"/><path d="M4 26 C3 18 4.5 10 8.5 7 C7.5 13 8 20 9.5 26 Z" fill="#7b5c3d"/><ellipse cx="14.6" cy="13.8" rx="5.3" ry="6.6" fill="#e6c3aa"/><path d="M8.8 12.4 C9.2 6.6 17 4.6 20.2 9.6 C16.5 8.4 12.6 9.2 8.8 12.4 Z" fill="#8e6c47"/><path d="M5 31 C6 24.5 10 22.2 14.6 23 C19.4 22.2 23.8 24.5 25 31 Z" fill="#9b9b99"/><path d="M12 20 L14.6 23.4 L17.4 20 L17 18.6 L12.4 18.6 Z" fill="#dfb9a0"/><path d="M12.2 16.6 Q14.6 18.6 17.2 16.6" stroke="#b5705e" stroke-width=".8" fill="none"/><path d="M11.4 12.2 h2 M15.8 12.2 h2" stroke="#5a4030" stroke-width=".8"/></g></svg><div class="rt" style="top:460.3px">Capacity</div><div class="tv" style="top:460.3px">144</div><div class="rt" style="top:482.2px">Utilisation</div><div class="tv" style="top:482.2px">0</div><div class="rt" style="top:504.1px">Availability</div><div class="tv" style="top:504.1px">144</div><div class="rl" style="top:477.7px"></div><div class="rl" style="top:499.6px"></div><div class="rl" style="top:521.6px"></div><div class="av" style="top:550.6px">ZN</div><div class="nm" style="top:551px">ZZ Network Engineer</div><div class="ro" style="top:568.8px">&nbsp;</div><div class="rt" style="top:546.5px">Capacity</div><div class="tv" style="top:546.5px">0</div><div class="rt" style="top:568.4px">Utilisation</div><div class="tv" style="top:568.4px">0</div><div class="rt" style="top:590.3px">Availability</div><div class="tv" style="top:590.3px">0</div><div class="rl" style="top:563.9px"></div><div class="rl" style="top:585.8px"></div><div class="rl" style="top:607.8px"></div><div class="vthumb"></div></div>
<div class="rbody"><div class="gl" style="top:71.2px"></div><div class="gl" style="top:156.9px"></div><div class="gl" style="top:242.7px"></div><div class="gl" style="top:328.4px"></div><div class="gl" style="top:369.6px"></div><div class="gl" style="top:456.1px"></div><div class="gl" style="top:542.3px"></div><div class="vl tl" style="left:60.65px"></div><div class="vl" style="left:121.9px"></div><div class="vl" style="left:182.85px"></div><div class="vl" style="left:243.8px"></div><div class="vl" style="left:304.75px"></div><div class="vl" style="left:365.7px"></div><div class="vl" style="left:426.65px"></div><div class="vl" style="left:487.6px"></div><div class="vl" style="left:548.55px"></div><div class="vl" style="left:609.5px"></div><div class="vl" style="left:670.45px"></div><div class="vl" style="left:731.4px"></div><div class="vl" style="left:792.35px"></div><div class="vl" style="left:853.3px"></div><div class="vl" style="left:914.25px"></div><div class="vl" style="left:975.2px"></div><div class="vl" style="left:1036.15px"></div><div class="crow" style="top:75.7px;height:19.7px;line-height:20.7px"><span class="c " style="left:0.8px;background:#76a9a4">32</span><span class="c " style="left:61.75px;background:#76a9a4">32</span><span class="c " style="left:122.7px;background:#76a9a4">32</span><span class="c " style="left:183.65px;background:#76a9a4">32</span><span class="c " style="left:244.6px;background:#76a9a4">32</span><span class="c " style="left:305.55px;background:#76a9a4">32</span><span class="c " style="left:366.5px;background:#76a9a4">32</span><span class="c " style="left:427.45px;background:#76a9a4">32</span><span class="c " style="left:488.4px;background:#76a9a4">32</span><span class="c " style="left:549.35px;background:#76a9a4">32</span><span class="c " style="left:610.3px;background:#76a9a4">32</span><span class="c " style="left:671.25px;background:#76a9a4">32</span><span class="c " style="left:732.2px;background:#76a9a4">32</span><span class="c " style="left:793.15px;background:#76a9a4">32</span><span class="c " style="left:854.1px;background:#76a9a4">32</span><span class="c " style="left:915.05px;background:#76a9a4">32</span><span class="c " style="left:976px;background:#76a9a4">32</span></div><div class="crow" style="top:97.7px;height:19.7px;line-height:20.7px"><span class="c w" style="left:0.8px;background:#91a39a">24</span><span class="c w" style="left:61.75px;background:#91a39a">24</span><span class="c w" style="left:122.7px;background:#91a39a">24</span><span class="c w" style="left:183.65px;background:#91a39a">24</span><span class="c w" style="left:244.6px;background:#91a39a">24</span><span class="c w" style="left:305.55px;background:#91a39a">24</span><span class="c w" style="left:366.5px;background:#91a39a">24</span><span class="c w" style="left:427.45px;background:#91a39a">24</span><span class="c " style="left:488.4px;background:#c982b1">16</span><span class="c " style="left:549.35px;background:#c982b1">16</span><span class="c w" style="left:610.3px;background:#91a39a">24</span><span class="c w" style="left:671.25px;background:#91a39a">24</span><span class="c w" style="left:732.2px;background:#91a39a">24</span><span class="c w" style="left:793.15px;background:#91a39a">24</span><span class="c w" style="left:854.1px;background:#91a39a">24</span><span class="c " style="left:915.05px;background:#c982b1">16</span><span class="c w" style="left:976px;background:#91a39a">24</span></div><div class="crow" style="top:119.7px;height:19.8px;line-height:20.8px"><span class="c " style="left:0.8px;background:#b5daee">8</span><span class="c " style="left:61.75px;background:#b5daee">8</span><span class="c " style="left:122.7px;background:#b5daee">8</span><span class="c " style="left:183.65px;background:#b5daee">8</span><span class="c " style="left:244.6px;background:#b5daee">8</span><span class="c " style="left:305.55px;background:#b5daee">8</span><span class="c " style="left:366.5px;background:#b5daee">8</span><span class="c " style="left:427.45px;background:#b5daee">8</span><span class="c " style="left:488.4px;background:#93c8e3">16</span><span class="c " style="left:549.35px;background:#93c8e3">16</span><span class="c " style="left:610.3px;background:#b5daee">8</span><span class="c " style="left:671.25px;background:#b5daee">8</span><span class="c " style="left:732.2px;background:#b5daee">8</span><span class="c " style="left:793.15px;background:#b5daee">8</span><span class="c " style="left:854.1px;background:#b5daee">8</span><span class="c " style="left:915.05px;background:#93c8e3">16</span><span class="c " style="left:976px;background:#b5daee">8</span></div><div class="crow" style="top:161.4px;height:19.7px;line-height:20.7px"><span class="c " style="left:0.8px;background:#76a9a4">8</span><span class="c " style="left:61.75px;background:#76a9a4">8</span><span class="c " style="left:122.7px;background:#76a9a4">8</span><span class="c " style="left:183.65px;background:#76a9a4">8</span><span class="c " style="left:244.6px;background:#76a9a4">8</span><span class="c " style="left:305.55px;background:#76a9a4">8</span><span class="c " style="left:366.5px;background:#76a9a4">8</span><span class="c " style="left:427.45px;background:#76a9a4">8</span><span class="c " style="left:488.4px;background:#76a9a4">8</span><span class="c " style="left:549.35px;background:#76a9a4">8</span><span class="c " style="left:610.3px;background:#76a9a4">8</span><span class="c " style="left:671.25px;background:#76a9a4">8</span><span class="c " style="left:732.2px;background:#76a9a4">8</span><span class="c " style="left:793.15px;background:#76a9a4">8</span><span class="c " style="left:854.1px;background:#76a9a4">8</span><span class="c " style="left:915.05px;background:#76a9a4">8</span><span class="c " style="left:976px;background:#76a9a4">8</span></div><div class="crow" style="top:183.4px;height:19.7px;line-height:20.7px"><span class="c w" style="left:0.8px;background:#66816a">8</span><span class="c w" style="left:61.75px;background:#66816a">8</span><span class="c w" style="left:122.7px;background:#66816a">8</span><span class="c w" style="left:183.65px;background:#66816a">8</span><span class="c w" style="left:244.6px;background:#66816a">8</span><span class="c w" style="left:305.55px;background:#66816a">8</span><span class="c w" style="left:366.5px;background:#66816a">8</span><span class="c w" style="left:427.45px;background:#66816a">8</span><span class="c w" style="left:488.4px;background:#66816a">8</span><span class="c w" style="left:549.35px;background:#66816a">8</span><span class="c w" style="left:610.3px;background:#ae4f2f">16</span><span class="c w" style="left:671.25px;background:#ae4f2f">16</span><span class="c w" style="left:732.2px;background:#ae4f2f">16</span><span class="c w" style="left:793.15px;background:#ae4f2f">16</span><span class="c w" style="left:854.1px;background:#ae4f2f">16</span><span class="c w" style="left:915.05px;background:#66816a">8</span><span class="c w" style="left:976px;background:#ae4f2f">16</span></div><div class="crow" style="top:205.4px;height:19.8px;line-height:20.8px"><span class="c " style="left:0.8px;background:#d5eaf5">0</span><span class="c " style="left:61.75px;background:#d5eaf5">0</span><span class="c " style="left:122.7px;background:#d5eaf5">0</span><span class="c " style="left:183.65px;background:#d5eaf5">0</span><span class="c " style="left:244.6px;background:#d5eaf5">0</span><span class="c " style="left:305.55px;background:#d5eaf5">0</span><span class="c " style="left:366.5px;background:#d5eaf5">0</span><span class="c " style="left:427.45px;background:#d5eaf5">0</span><span class="c " style="left:488.4px;background:#d5eaf5">0</span><span class="c " style="left:549.35px;background:#d5eaf5">0</span><span class="c neg" style="left:610.3px;background:#d5eaf5">-8</span><span class="c neg" style="left:671.25px;background:#d5eaf5">-8</span><span class="c neg" style="left:732.2px;background:#d5eaf5">-8</span><span class="c neg" style="left:793.15px;background:#d5eaf5">-8</span><span class="c neg" style="left:854.1px;background:#d5eaf5">-8</span><span class="c " style="left:915.05px;background:#d5eaf5">0</span><span class="c neg" style="left:976px;background:#d5eaf5">-8</span></div><div class="crow" style="top:247.2px;height:19.7px;line-height:20.7px"><span class="c " style="left:0.8px;background:#76a9a4">8</span><span class="c " style="left:61.75px;background:#76a9a4">8</span><span class="c " style="left:122.7px;background:#76a9a4">8</span><span class="c " style="left:183.65px;background:#76a9a4">8</span><span class="c " style="left:244.6px;background:#76a9a4">8</span><span class="c " style="left:305.55px;background:#76a9a4">8</span><span class="c " style="left:366.5px;background:#76a9a4">8</span><span class="c " style="left:427.45px;background:#76a9a4">8</span><span class="c " style="left:488.4px;background:#76a9a4">8</span><span class="c " style="left:549.35px;background:#76a9a4">8</span><span class="c " style="left:610.3px;background:#76a9a4">8</span><span class="c " style="left:671.25px;background:#76a9a4">8</span><span class="c " style="left:732.2px;background:#76a9a4">8</span><span class="c " style="left:793.15px;background:#76a9a4">8</span><span class="c " style="left:854.1px;background:#76a9a4">8</span><span class="c " style="left:915.05px;background:#76a9a4">8</span><span class="c " style="left:976px;background:#76a9a4">8</span></div><div class="crow" style="top:269.2px;height:19.7px;line-height:20.7px"><span class="c w" style="left:0.8px;background:#66816a">8</span><span class="c w" style="left:61.75px;background:#66816a">8</span><span class="c w" style="left:122.7px;background:#66816a">8</span><span class="c w" style="left:183.65px;background:#66816a">8</span><span class="c w" style="left:244.6px;background:#66816a">8</span><span class="c w" style="left:305.55px;background:#66816a">8</span><span class="c w" style="left:366.5px;background:#66816a">8</span><span class="c w" style="left:427.45px;background:#66816a">8</span><span class="c " style="left:488.4px;background:#7e9ccb">0</span><span class="c " style="left:549.35px;background:#7e9ccb">0</span><span class="c " style="left:610.3px;background:#7e9ccb">0</span><span class="c " style="left:671.25px;background:#7e9ccb">0</span><span class="c " style="left:732.2px;background:#7e9ccb">0</span><span class="c " style="left:793.15px;background:#7e9ccb">0</span><span class="c " style="left:854.1px;background:#7e9ccb">0</span><span class="c " style="left:915.05px;background:#7e9ccb">0</span><span class="c " style="left:976px;background:#7e9ccb">0</span></div><div class="crow" style="top:291.2px;height:19.8px;line-height:20.8px"><span class="c " style="left:0.8px;background:#d5eaf5">0</span><span class="c " style="left:61.75px;background:#d5eaf5">0</span><span class="c " style="left:122.7px;background:#d5eaf5">0</span><span class="c " style="left:183.65px;background:#d5eaf5">0</span><span class="c " style="left:244.6px;background:#d5eaf5">0</span><span class="c " style="left:305.55px;background:#d5eaf5">0</span><span class="c " style="left:366.5px;background:#d5eaf5">0</span><span class="c " style="left:427.45px;background:#d5eaf5">0</span><span class="c w" style="left:488.4px;background:#5b80a7">8</span><span class="c w" style="left:549.35px;background:#5b80a7">8</span><span class="c w" style="left:610.3px;background:#5b80a7">8</span><span class="c w" style="left:671.25px;background:#5b80a7">8</span><span class="c w" style="left:732.2px;background:#5b80a7">8</span><span class="c w" style="left:793.15px;background:#5b80a7">8</span><span class="c w" style="left:854.1px;background:#5b80a7">8</span><span class="c w" style="left:915.05px;background:#5b80a7">8</span><span class="c w" style="left:976px;background:#5b80a7">8</span></div><div class="pbar" style="top:334.6px"><span>00. 5G Network Deployment</span>
<svg class="pi" style="left:154.5px" width="18" height="18" viewBox="0 0 18 18"><circle cx="9" cy="9" r="8.8" fill="#fff"/><path d="M9 4.9 L10.15 7.55 L13 7.85 L10.85 9.75 L11.5 12.55 L9 11.05 L6.5 12.55 L7.15 9.75 L5 7.85 L7.85 7.55 Z" fill="none" stroke="#222" stroke-width="1" stroke-linejoin="round"/></svg>
<svg class="pi" style="left:174.5px" width="18" height="18" viewBox="0 0 18 18"><circle cx="9" cy="9" r="8.8" fill="#fff"/><rect x="5" y="4.6" width="8.2" height="8.2" fill="none" stroke="#222" stroke-width="1.1"/></svg>
<svg class="pi" style="left:193.8px" width="18" height="18" viewBox="0 0 18 18"><circle cx="9" cy="9" r="8.6" fill="#fff"/><path d="M9 4.2 L13.6 12.6 L4.4 12.6 Z" fill="#f5143c"/></svg>
</div><div class="crow" style="top:374.1px;height:19.7px;line-height:20.7px"><span class="c " style="left:0.8px;background:#76a9a4">8</span><span class="c " style="left:61.75px;background:#76a9a4">8</span><span class="c " style="left:122.7px;background:#76a9a4">8</span><span class="c " style="left:183.65px;background:#76a9a4">8</span><span class="c " style="left:244.6px;background:#76a9a4">8</span><span class="c " style="left:305.55px;background:#76a9a4">8</span><span class="c " style="left:366.5px;background:#76a9a4">8</span><span class="c " style="left:427.45px;background:#76a9a4">8</span><span class="c " style="left:488.4px;background:#76a9a4">8</span><span class="c " style="left:549.35px;background:#76a9a4">8</span><span class="c " style="left:610.3px;background:#76a9a4">8</span><span class="c " style="left:671.25px;background:#76a9a4">8</span><span class="c " style="left:732.2px;background:#76a9a4">8</span><span class="c " style="left:793.15px;background:#76a9a4">8</span><span class="c " style="left:854.1px;background:#76a9a4">8</span><span class="c " style="left:915.05px;background:#76a9a4">8</span><span class="c " style="left:976px;background:#76a9a4">8</span></div><div class="crow" style="top:396.1px;height:19.7px;line-height:20.7px"><span class="c w" style="left:0.8px;background:#66816a">8</span><span class="c w" style="left:61.75px;background:#66816a">8</span><span class="c w" style="left:122.7px;background:#66816a">8</span><span class="c w" style="left:183.65px;background:#66816a">8</span><span class="c w" style="left:244.6px;background:#66816a">8</span><span class="c w" style="left:305.55px;background:#66816a">8</span><span class="c w" style="left:366.5px;background:#66816a">8</span><span class="c w" style="left:427.45px;background:#66816a">8</span><span class="c w" style="left:488.4px;background:#66816a">8</span><span class="c w" style="left:549.35px;background:#66816a">8</span><span class="c w" style="left:610.3px;background:#66816a">8</span><span class="c w" style="left:671.25px;background:#66816a">8</span><span class="c w" style="left:732.2px;background:#66816a">8</span><span class="c w" style="left:793.15px;background:#66816a">8</span><span class="c w" style="left:854.1px;background:#66816a">8</span><span class="c w" style="left:915.05px;background:#66816a">8</span><span class="c w" style="left:976px;background:#66816a">8</span></div><div class="crow" style="top:418.1px;height:19.8px;line-height:20.8px"><span class="c " style="left:0.8px;background:#d5eaf5">0</span><span class="c " style="left:61.75px;background:#d5eaf5">0</span><span class="c " style="left:122.7px;background:#d5eaf5">0</span><span class="c " style="left:183.65px;background:#d5eaf5">0</span><span class="c " style="left:244.6px;background:#d5eaf5">0</span><span class="c " style="left:305.55px;background:#d5eaf5">0</span><span class="c " style="left:366.5px;background:#d5eaf5">0</span><span class="c " style="left:427.45px;background:#d5eaf5">0</span><span class="c " style="left:488.4px;background:#d5eaf5">0</span><span class="c " style="left:549.35px;background:#d5eaf5">0</span><span class="c " style="left:610.3px;background:#d5eaf5">0</span><span class="c " style="left:671.25px;background:#d5eaf5">0</span><span class="c " style="left:732.2px;background:#d5eaf5">0</span><span class="c " style="left:793.15px;background:#d5eaf5">0</span><span class="c " style="left:854.1px;background:#d5eaf5">0</span><span class="c " style="left:915.05px;background:#d5eaf5">0</span><span class="c " style="left:976px;background:#d5eaf5">0</span></div><div class="crow" style="top:460.6px;height:19.7px;line-height:20.7px"><span class="c " style="left:0.8px;background:#76a9a4">8</span><span class="c " style="left:61.75px;background:#76a9a4">8</span><span class="c " style="left:122.7px;background:#76a9a4">8</span><span class="c " style="left:183.65px;background:#76a9a4">8</span><span class="c " style="left:244.6px;background:#76a9a4">8</span><span class="c " style="left:305.55px;background:#76a9a4">8</span><span class="c " style="left:366.5px;background:#76a9a4">8</span><span class="c " style="left:427.45px;background:#76a9a4">8</span><span class="c " style="left:488.4px;background:#76a9a4">8</span><span class="c " style="left:549.35px;background:#76a9a4">8</span><span class="c " style="left:610.3px;background:#76a9a4">8</span><span class="c " style="left:671.25px;background:#76a9a4">8</span><span class="c " style="left:732.2px;background:#76a9a4">8</span><span class="c " style="left:793.15px;background:#76a9a4">8</span><span class="c " style="left:854.1px;background:#76a9a4">8</span><span class="c " style="left:915.05px;background:#76a9a4">8</span><span class="c " style="left:976px;background:#76a9a4">8</span></div><div class="crow" style="top:482.6px;height:19.7px;line-height:20.7px"><span class="c " style="left:0.8px;background:#7e9ccb">0</span><span class="c " style="left:61.75px;background:#7e9ccb">0</span><span class="c " style="left:122.7px;background:#7e9ccb">0</span><span class="c " style="left:183.65px;background:#7e9ccb">0</span><span class="c " style="left:244.6px;background:#7e9ccb">0</span><span class="c " style="left:305.55px;background:#7e9ccb">0</span><span class="c " style="left:366.5px;background:#7e9ccb">0</span><span class="c " style="left:427.45px;background:#7e9ccb">0</span><span class="c " style="left:488.4px;background:#7e9ccb">0</span><span class="c " style="left:549.35px;background:#7e9ccb">0</span><span class="c " style="left:610.3px;background:#7e9ccb">0</span><span class="c " style="left:671.25px;background:#7e9ccb">0</span><span class="c " style="left:732.2px;background:#7e9ccb">0</span><span class="c " style="left:793.15px;background:#7e9ccb">0</span><span class="c " style="left:854.1px;background:#7e9ccb">0</span><span class="c " style="left:915.05px;background:#7e9ccb">0</span><span class="c " style="left:976px;background:#7e9ccb">0</span></div><div class="crow" style="top:504.6px;height:19.8px;line-height:20.8px"><span class="c w" style="left:0.8px;background:#5b80a7">8</span><span class="c w" style="left:61.75px;background:#5b80a7">8</span><span class="c w" style="left:122.7px;background:#5b80a7">8</span><span class="c w" style="left:183.65px;background:#5b80a7">8</span><span class="c w" style="left:244.6px;background:#5b80a7">8</span><span class="c w" style="left:305.55px;background:#5b80a7">8</span><span class="c w" style="left:366.5px;background:#5b80a7">8</span><span class="c w" style="left:427.45px;background:#5b80a7">8</span><span class="c w" style="left:488.4px;background:#5b80a7">8</span><span class="c w" style="left:549.35px;background:#5b80a7">8</span><span class="c w" style="left:610.3px;background:#5b80a7">8</span><span class="c w" style="left:671.25px;background:#5b80a7">8</span><span class="c w" style="left:732.2px;background:#5b80a7">8</span><span class="c w" style="left:793.15px;background:#5b80a7">8</span><span class="c w" style="left:854.1px;background:#5b80a7">8</span><span class="c w" style="left:915.05px;background:#5b80a7">8</span><span class="c w" style="left:976px;background:#5b80a7">8</span></div><div class="crow" style="top:546.8px;height:19.7px;line-height:20.7px"><span class="c " style="left:0.8px;background:#76a9a4">0</span><span class="c " style="left:61.75px;background:#76a9a4">0</span><span class="c " style="left:122.7px;background:#76a9a4">0</span><span class="c " style="left:183.65px;background:#76a9a4">0</span><span class="c " style="left:244.6px;background:#76a9a4">0</span><span class="c " style="left:305.55px;background:#76a9a4">0</span><span class="c " style="left:366.5px;background:#76a9a4">0</span><span class="c " style="left:427.45px;background:#76a9a4">0</span><span class="c " style="left:488.4px;background:#76a9a4">0</span><span class="c " style="left:549.35px;background:#76a9a4">0</span><span class="c " style="left:610.3px;background:#76a9a4">0</span><span class="c " style="left:671.25px;background:#76a9a4">0</span><span class="c " style="left:732.2px;background:#76a9a4">0</span><span class="c " style="left:793.15px;background:#76a9a4">0</span><span class="c " style="left:854.1px;background:#76a9a4">0</span><span class="c " style="left:915.05px;background:#76a9a4">0</span><span class="c " style="left:976px;background:#76a9a4">0</span></div><div class="crow" style="top:568.8px;height:19.7px;line-height:20.7px"><span class="c " style="left:0.8px;background:#7e9ccb">0</span><span class="c " style="left:61.75px;background:#7e9ccb">0</span><span class="c " style="left:122.7px;background:#7e9ccb">0</span><span class="c " style="left:183.65px;background:#7e9ccb">0</span><span class="c " style="left:244.6px;background:#7e9ccb">0</span><span class="c " style="left:305.55px;background:#7e9ccb">0</span><span class="c " style="left:366.5px;background:#7e9ccb">0</span><span class="c " style="left:427.45px;background:#7e9ccb">0</span><span class="c " style="left:488.4px;background:#7e9ccb">0</span><span class="c " style="left:549.35px;background:#7e9ccb">0</span><span class="c " style="left:610.3px;background:#7e9ccb">0</span><span class="c " style="left:671.25px;background:#7e9ccb">0</span><span class="c " style="left:732.2px;background:#7e9ccb">0</span><span class="c " style="left:793.15px;background:#7e9ccb">0</span><span class="c " style="left:854.1px;background:#7e9ccb">0</span><span class="c " style="left:915.05px;background:#7e9ccb">0</span><span class="c " style="left:976px;background:#7e9ccb">0</span></div><div class="crow" style="top:590.8px;height:19.8px;line-height:20.8px"><span class="c " style="left:0.8px;background:#d5eaf5">0</span><span class="c " style="left:61.75px;background:#d5eaf5">0</span><span class="c " style="left:122.7px;background:#d5eaf5">0</span><span class="c " style="left:183.65px;background:#d5eaf5">0</span><span class="c " style="left:244.6px;background:#d5eaf5">0</span><span class="c " style="left:305.55px;background:#d5eaf5">0</span><span class="c " style="left:366.5px;background:#d5eaf5">0</span><span class="c " style="left:427.45px;background:#d5eaf5">0</span><span class="c " style="left:488.4px;background:#d5eaf5">0</span><span class="c " style="left:549.35px;background:#d5eaf5">0</span><span class="c " style="left:610.3px;background:#d5eaf5">0</span><span class="c " style="left:671.25px;background:#d5eaf5">0</span><span class="c " style="left:732.2px;background:#d5eaf5">0</span><span class="c " style="left:793.15px;background:#d5eaf5">0</span><span class="c " style="left:854.1px;background:#d5eaf5">0</span><span class="c " style="left:915.05px;background:#d5eaf5">0</span><span class="c " style="left:976px;background:#d5eaf5">0</span></div></div>
<div class="bcov"></div><div class="bbar"></div><div class="bbar2"></div><div class="hth1"></div><div class="hth2"></div>
</div>
</body></html>
